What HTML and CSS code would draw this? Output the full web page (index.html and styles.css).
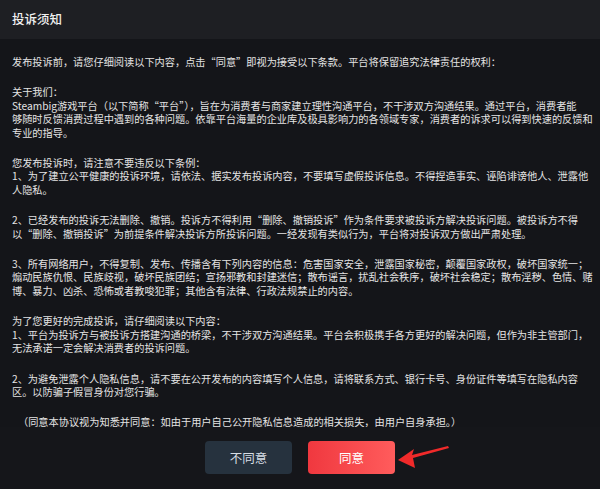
FILE: index.html
```html
<!DOCTYPE html>
<html lang="zh-CN">
<head>
<meta charset="utf-8">
<link rel="stylesheet" href="styles.css">
</head>
<body>
<div class="dialog">
  <div class="header">投诉须知</div>
  <div class="content">
    <p>发布投诉前，请您仔细阅读以下内容，点击“同意”即视为接受以下条款。平台将保留追究法律责任的权利：</p>
    <p>关于我们：<br>Steambig游戏平台（以下简称“平台”），旨在为消费者与商家建立理性沟通平台，不干涉双方沟通结果。通过平台，消费者能<br>够随时反馈消费过程中遇到的各种问题。依靠平台海量的企业库及极具影响力的各领域专家，消费者的诉求可以得到快速的反馈和<br>专业的指导。</p>
    <p>您发布投诉时，请注意不要违反以下条例：<br>1、为了建立公平健康的投诉环境，请依法、据实发布投诉内容，不要填写虚假投诉信息。不得捏造事实、诬陷诽谤他人、泄露他<br>人隐私。</p>
    <p>2、已经发布的投诉无法删除、撤销。投诉方不得利用“删除、撤销投诉”作为条件要求被投诉方解决投诉问题。被投诉方不得<br>以“删除、撤销投诉”为前提条件解决投诉方所投诉问题。一经发现有类似行为，平台将对投诉双方做出严肃处理。</p>
    <p>3、所有网络用户，不得复制、发布、传播含有下列内容的信息：危害国家安全，泄露国家秘密，颠覆国家政权，破坏国家统一；<br>煽动民族仇恨、民族歧视，破坏民族团结；宣扬邪教和封建迷信；散布谣言，扰乱社会秩序，破坏社会稳定；散布淫秽、色情、赌<br>博、暴力、凶杀、恐怖或者教唆犯罪；其他含有法律、行政法规禁止的内容。</p>
    <p>为了您更好的完成投诉，请仔细阅读以下内容：<br>1、平台为投诉方与被投诉方搭建沟通的桥梁，不干涉双方沟通结果。平台会积极携手各方更好的解决问题，但作为非主管部门，<br>无法承诺一定会解决消费者的投诉问题。</p>
    <p>2、为避免泄露个人隐私信息，请不要在公开发布的内容填写个人信息，请将联系方式、银行卡号、身份证件等填写在隐私内容<br>区。以防骗子假冒身份对您行骗。</p>
    <p class="note">（同意本协议视为知悉并同意：如由于用户自己公开隐私信息造成的相关损失，由用户自身承担。）</p>
  </div>
  <div class="footer">
    <button class="btn btn-cancel">不同意</button>
    <button class="btn btn-ok">同意</button>
    <svg class="arrow" width="56" height="30" viewBox="0 0 56 30">
      <path d="M2 17 L18 6 L16 12 L52 3 L53 5 L17 15 L19 25 Z" fill="#f02a2a"/>
    </svg>
  </div>
</div>
</body>
</html>
```
FILE: styles.css
```css
* { box-sizing: border-box; }
html, body {
  margin: 0;
  padding: 0;
  background: #15161a;
}
body {
  width: 600px;
  height: 489px;
  overflow: hidden;
  font-family: "Noto Sans CJK SC", "Noto Sans", sans-serif;
}
.dialog {
  display: flex;
  flex-direction: column;
  height: 489px;
}
.header {
  height: 39px;
  flex: none;
  background: #1e1f23;
  color: #f0f0f0;
  font-size: 12.5px;
  line-height: 37px;
  padding-left: 12px;
  font-weight: 500;
}
.content {
  flex: 1;
  overflow: hidden;
  padding: 16px 12px 0 12px;
  color: #e4e4e4;
  font-size: 10.2px;
  line-height: 13.4px;
  background: #141519;
}
.content p {
  margin: 0 0 17px 0;
  white-space: nowrap;
}
.content .note {
  padding-left: 6px;
}
.footer {
  position: relative;
  height: 62px;
  flex: none;
  background: #15161a;
  display: flex;
  justify-content: center;
  align-items: flex-start;
  gap: 16px;
  padding-top: 14px;
}
.btn {
  width: 87px;
  height: 33px;
  border: none;
  border-radius: 4px;
  font-family: inherit;
  font-size: 12.5px;
  padding: 0;
}
.btn-cancel {
  background: #26323e;
  color: #d6dde4;
}
.btn-ok {
  background: linear-gradient(90deg, #f0383f, #ff5c5c);
  color: #ffffff;
}
.arrow {
  position: absolute;
  left: 396px;
  top: 16px;
}
```
